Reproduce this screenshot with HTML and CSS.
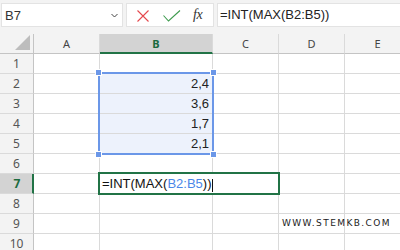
FILE: index.html
```html
<!DOCTYPE html>
<html>
<head>
<meta charset="utf-8">
<link rel="stylesheet" href="styles.css">
</head>
<body>
<div class="toolbar">
  <div class="namebox">
    <span class="name">B7</span>
    <svg class="chev" width="7" height="5" viewBox="0 0 7 5"><polyline points="0.5,1 3.5,4 6.5,1" fill="none" stroke="#444" stroke-width="1"/></svg>
  </div>
  <div class="fxbox">
    <svg class="ico-x" width="12" height="12" viewBox="0 0 12 12"><path d="M0.5 0.5 L11.5 11.5 M11.5 0.5 L0.5 11.5" stroke="#e5484d" stroke-width="1.1" fill="none"/></svg>
    <svg class="ico-ok" width="18" height="12" viewBox="0 0 18 12"><polyline points="0.5,5.5 5.5,11 17,0.5" fill="none" stroke="#3f9b4f" stroke-width="1.1"/></svg>
    <span class="fx">fx</span>
  </div>
  <div class="formula">=INT(MAX(B2:B5))</div>
</div>
<div class="sheet">
  <div class="grid">
    <div class="corner"><svg width="16" height="15" viewBox="0 0 16 15"><polygon points="15,0 15,15 0,15" fill="#bdbdbd"/></svg></div>
    <div class="ch">A</div>
    <div class="ch ch-sel">B</div>
    <div class="ch">C</div>
    <div class="ch">D</div>
    <div class="ch">E</div>

    <div class="rh">1</div><div class="c"></div><div class="c"></div><div class="c"></div><div class="c"></div><div class="c"></div>
    <div class="rh">2</div><div class="c"></div><div class="c num sel">2,4</div><div class="c"></div><div class="c"></div><div class="c"></div>
    <div class="rh">3</div><div class="c"></div><div class="c num sel">3,6</div><div class="c"></div><div class="c"></div><div class="c"></div>
    <div class="rh">4</div><div class="c"></div><div class="c num sel">1,7</div><div class="c"></div><div class="c"></div><div class="c"></div>
    <div class="rh">5</div><div class="c"></div><div class="c num sel">2,1</div><div class="c"></div><div class="c"></div><div class="c"></div>
    <div class="rh">6</div><div class="c"></div><div class="c"></div><div class="c"></div><div class="c"></div><div class="c"></div>
    <div class="rh rh-sel">7</div><div class="c"></div><div class="c"></div><div class="c"></div><div class="c"></div><div class="c"></div>
    <div class="rh">8</div><div class="c"></div><div class="c"></div><div class="c"></div><div class="c"></div><div class="c"></div>
    <div class="rh">9</div><div class="c"></div><div class="c"></div><div class="c"></div><div class="c wm-cell"><span class="wm">WWW.STEMKB.COM</span></div><div class="c"></div>
    <div class="rh">10</div><div class="c"></div><div class="c"></div><div class="c"></div><div class="c"></div><div class="c"></div>
  </div>
  <div class="selection">
    <span class="h h-tl"></span><span class="h h-tr"></span><span class="h h-bl"></span><span class="h h-br"></span>
  </div>
  <div class="editor">=INT(MAX(<span class="ref">B2:B5</span>))<span class="caret"></span></div>
</div>
</body>
</html>
```
FILE: styles.css
```css
html, body {
  margin: 0;
  padding: 0;
}
body {
  width: 400px;
  height: 250px;
  overflow: hidden;
  background: #fff;
  font-family: "Liberation Sans", Arial, sans-serif;
  color: #222;
}

/* ---------- toolbar ---------- */
.toolbar {
  display: flex;
  height: 34px;
  box-sizing: border-box;
  padding: 3px 0 0 1px;
  background: #f3f3f3;
}
.namebox, .fxbox, .formula {
  height: 24px;
  box-sizing: border-box;
  background: #fff;
  border: 1px solid #e3e3e3;
}
.namebox {
  width: 122px;
  display: flex;
  align-items: center;
  justify-content: space-between;
  padding: 0 4px 0 3px;
}
.name {
  font-size: 13px;
  color: #333;
}
.chev {
  margin-top: 1px;
}
.fxbox {
  width: 88px;
  margin-left: 3px;
  display: flex;
  align-items: center;
  padding-left: 10px;
}
.ico-x {
  margin-top: 1px;
}
.ico-ok {
  margin-left: 14px;
  margin-top: 1px;
}
.fx {
  margin-left: 12px;
  font-family: "Liberation Serif", "Times New Roman", serif;
  font-style: italic;
  font-size: 14px;
  color: #333;
  letter-spacing: -0.5px;
}
.formula {
  flex: 1;
  margin-left: 3px;
  border-right: none;
  padding-left: 2px;
  font-size: 13px;
  line-height: 22px;
  color: #222;
}

/* ---------- sheet ---------- */
.sheet {
  position: relative;
  height: 216px;
  overflow: hidden;
}
.grid {
  display: grid;
  grid-template-columns: 34px 66px 113px 66px 66px 66px;
  grid-auto-rows: 20px;
}
.grid > div {
  box-sizing: border-box;
  border-right: 1px solid #dadada;
  border-bottom: 1px solid #dadada;
}
.corner {
  background: #f3f3f3;
  display: flex;
  align-items: flex-end;
  justify-content: flex-end;
  padding: 0 2px 3px 0;
}
.grid > .corner {
  border-bottom-color: #c4c4c4;
  border-right-color: #c4c4c4;
}
.grid > .ch {
  background: #f3f3f3;
  border-bottom-color: #c4c4c4;
  font-family: "Noto Sans", "Liberation Sans", sans-serif;
  font-size: 11px;
  color: #444;
  display: flex;
  align-items: center;
  justify-content: center;
}
.grid > .ch-sel {
  background: #d3d3d3;
  border-bottom: 2px solid #217346;
  color: #1c6b3f;
  font-weight: bold;
  padding-top: 1px;
}
.grid > .rh {
  background: #f3f3f3;
  border-right-color: #c4c4c4;
  font-family: "Noto Sans", "Liberation Sans", sans-serif;
  font-size: 12px;
  color: #555;
  display: flex;
  align-items: center;
  justify-content: center;
}
.grid > .rh-sel {
  background: #d3d3d3;
  border-right: 2px solid #217346;
  color: #1c6b3f;
  font-weight: bold;
  padding-left: 2px;
}
.c {
  font-size: 13px;
  line-height: 16px;
}
.num {
  display: flex;
  align-items: flex-end;
  justify-content: flex-end;
  padding: 0 3px 1px 0;
}
.grid > .sel {
  background: #edf2fc;
}
.wm-cell {
  position: relative;
  overflow: visible;
  display: flex;
  align-items: flex-end;
}
.wm {
  white-space: nowrap;
  font-family: "DejaVu Sans", Verdana, sans-serif;
  font-size: 9px;
  letter-spacing: 1.4px;
  color: #222;
  margin-left: 3px;
  line-height: 11px;
  padding-bottom: 4px;
}

/* ---------- overlays ---------- */
.selection {
  position: absolute;
  left: 98px;
  top: 38px;
  width: 116px;
  height: 83px;
  box-sizing: border-box;
  border: 2px solid #6b97e8;
}
.h {
  position: absolute;
  width: 5px;
  height: 5px;
  background: #6b97e8;
  border: 1px solid #fff;
}
.h-tl { left: -5px; top: -5px; }
.h-tr { right: -5px; top: -5px; }
.h-bl { left: -5px; bottom: -5px; }
.h-br { right: -5px; bottom: -5px; }

.editor {
  position: absolute;
  left: 98px;
  top: 138px;
  width: 182px;
  height: 23px;
  box-sizing: border-box;
  border: 2px solid #217346;
  background: #fff;
  font-size: 13px;
  line-height: 19px;
  padding-left: 2px;
  color: #111;
  display: flex;
  align-items: flex-end;
}
.ref {
  color: #4a86e8;
}
.caret {
  display: inline-block;
  width: 1px;
  height: 13px;
  background: #111;
  margin-left: 1px;
  margin-bottom: 1px;
}
```
